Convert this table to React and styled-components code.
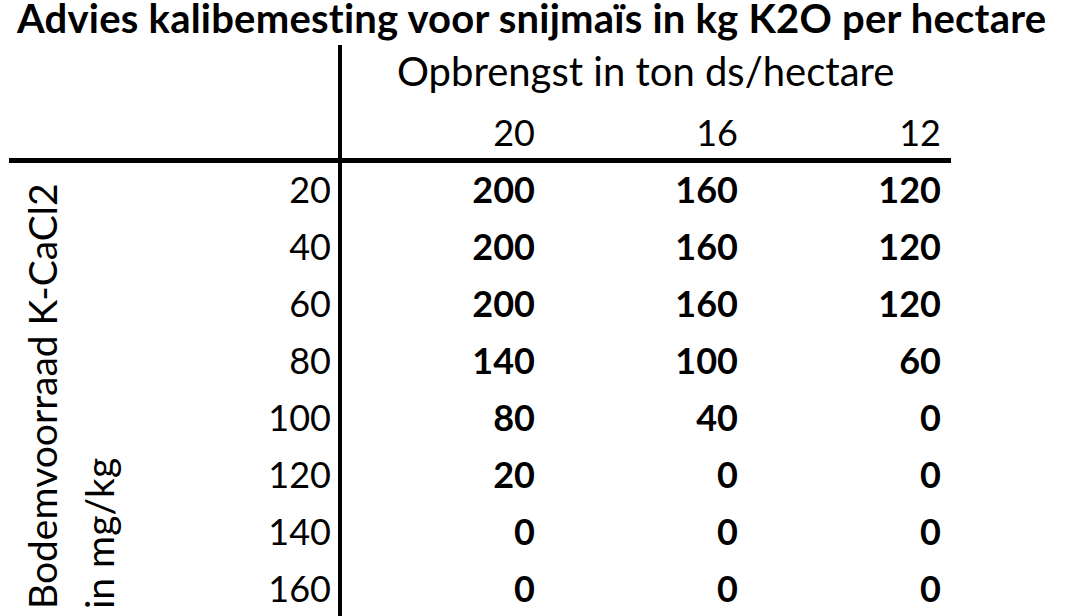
import React from "react";
import styled, { createGlobalStyle } from "styled-components";

const GlobalStyle = createGlobalStyle`
  html, body {
    margin: 0;
    padding: 0;
    background: #ffffff;
  }
  body {
    font-family: "Lato", "Liberation Sans", sans-serif;
    font-variant-ligatures: none;
    color: #000000;
    overflow: hidden;
  }
`;

const columns = [20, 16, 12];

const rows = [
  { stock: 20, values: [200, 160, 120] },
  { stock: 40, values: [200, 160, 120] },
  { stock: 60, values: [200, 160, 120] },
  { stock: 80, values: [140, 100, 60] },
  { stock: 100, values: [80, 40, 0] },
  { stock: 120, values: [20, 0, 0] },
  { stock: 140, values: [0, 0, 0] },
  { stock: 160, values: [0, 0, 0] },
];

function App() {
  return (
    <>
      <GlobalStyle />
      <Page>
        <Title>Advies kalibemesting voor snijmaïs in kg K2O per hectare</Title>
        <Table>
          <Corner />
          <YieldCaption>Opbrengst in ton ds/hectare</YieldCaption>
          <CornerBottom />
          {columns.map((c) => (
            <HeadCell key={c}>{c}</HeadCell>
          ))}

          <SideLabel style={{ gridRow: `3 / span ${rows.length}` }}>
            <LabelLine>Bodemvoorraad K-CaCl2</LabelLine>
            <LabelLine>in mg/kg</LabelLine>
          </SideLabel>

          {rows.map((r) => (
            <React.Fragment key={r.stock}>
              <StubCell>{r.stock}</StubCell>
              {r.values.map((v, i) => (
                <ValueCell key={i}>{v}</ValueCell>
              ))}
            </React.Fragment>
          ))}
        </Table>
      </Page>
    </>
  );
}

export default App;

const Page = styled.div`
  width: 1070px;
  height: 616px;
  overflow: hidden;
`;

const Title = styled.h1`
  margin: 0;
  padding-left: 17px;
  height: 45px;
  font-size: 40px;
  font-weight: 700;
  line-height: 36px;
  letter-spacing: 0.22px;
  white-space: nowrap;
`;

const Table = styled.div`
  display: grid;
  grid-template-columns: 190px 143px 203px 203px 203px;
  grid-template-rows: 55px 63px repeat(8, 57px);
  margin-left: 9px;
  font-size: 36px;
`;

const Corner = styled.div`
  grid-column: 1 / span 2;
  border-right: 4px solid #000;
`;

const CornerBottom = styled.div`
  grid-column: 1 / span 2;
  border-right: 4px solid #000;
  border-bottom: 5px solid #000;
`;

const YieldCaption = styled.div`
  grid-column: 3 / span 3;
  padding-left: 55px;
  font-size: 40px;
  line-height: 53px;
  white-space: nowrap;
`;

const HeadCell = styled.div`
  text-align: right;
  padding-right: 10px;
  line-height: 64px;
  border-bottom: 5px solid #000;
`;

const SideLabel = styled.div`
  grid-column: 1;
  display: flex;
  flex-direction: column;
  writing-mode: vertical-rl;
  transform: rotate(180deg);
  padding-top: 10px;
  padding-right: 5px;
  font-size: 39px;
  white-space: nowrap;
`;

const LabelLine = styled.div`
  line-height: 57px;
`;

const StubCell = styled.div`
  grid-column: 2;
  text-align: right;
  padding-right: 7px;
  line-height: 52px;
  border-right: 4px solid #000;
`;

const ValueCell = styled.div`
  text-align: right;
  padding-right: 10px;
  line-height: 52px;
  font-weight: 700;
`;
